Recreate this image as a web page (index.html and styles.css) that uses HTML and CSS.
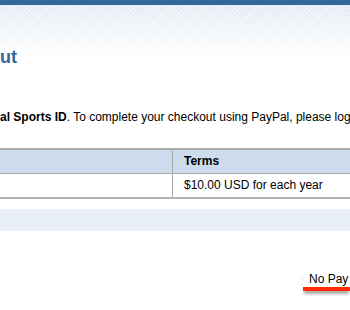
FILE: index.html
```html
<!DOCTYPE html>
<html>
<head>
<meta charset="utf-8">
<link rel="stylesheet" href="styles.css">
</head>
<body>
<div class="topbar"></div>
<div class="header">
  <h1 class="title">ut</h1>
</div>
<p class="intro"><b>al Sports ID</b>. To complete your checkout using PayPal, please log</p>
<div class="table">
  <div class="row head">
    <div class="cell c1"></div>
    <div class="cell c2">Terms</div>
  </div>
  <div class="row">
    <div class="cell c1"></div>
    <div class="cell c2">$10.00 USD for each year</div>
  </div>
</div>
<div class="band"></div>
<div class="footer">
  <div class="nopay">No Pay</div>
</div>
</body>
</html>
```
FILE: styles.css
```css
html, body {
  margin: 0;
  padding: 0;
  width: 350px;
  height: 310px;
  overflow: hidden;
  background: #fff;
  font-family: "Liberation Sans", Arial, sans-serif;
  color: #000;
}
.topbar {
  height: 5px;
  background: #336699;
}
.header {
  height: 50px;
  background:
    repeating-linear-gradient(135deg, rgba(255,255,255,0.55) 0 1px, rgba(255,255,255,0) 1px 3px),
    linear-gradient(to bottom, #e3ebf3 0%, #f3f6fa 60%, #ffffff 100%);
  position: relative;
}
.title {
  margin: 0;
  position: absolute;
  left: 0;
  top: 41px;
  font-family: "Liberation Sans", Arial, sans-serif;
  font-size: 18px;
  font-weight: bold;
  color: #336699;
  line-height: 22px;
}
.intro {
  margin: 55px 0 0 0;
  font-size: 12px;
  line-height: 14px;
  white-space: nowrap;
}
.table {
  margin-top: 24px;
  border-top: 2px solid #aaaaaa;
  border-bottom: 2px solid #b4b4b4;
}
.row {
  display: flex;
  height: 23px;
}
.row.head {
  background: #ccdcec;
  border-bottom: 1px solid #aaaaaa;
  font-weight: bold;
}
.cell {
  font-size: 12px;
  line-height: 23px;
}
.c1 {
  width: 172px;
  border-right: 1px solid #aaaaaa;
}
.c2 {
  padding-left: 11px;
  flex: 1;
}
.band {
  margin-top: 10px;
  height: 22px;
  background: #e8eff7;
}
.footer {
  display: flex;
  justify-content: flex-end;
  padding-top: 40px;
}
.nopay {
  width: 41px;
  padding-left: 6px;
  font-size: 12px;
  line-height: 16px;
  white-space: nowrap;
  border-bottom: 4px solid #ff2a00;
  box-shadow: 0 4px 3px -1px rgba(0,0,0,0.35);
}
```
